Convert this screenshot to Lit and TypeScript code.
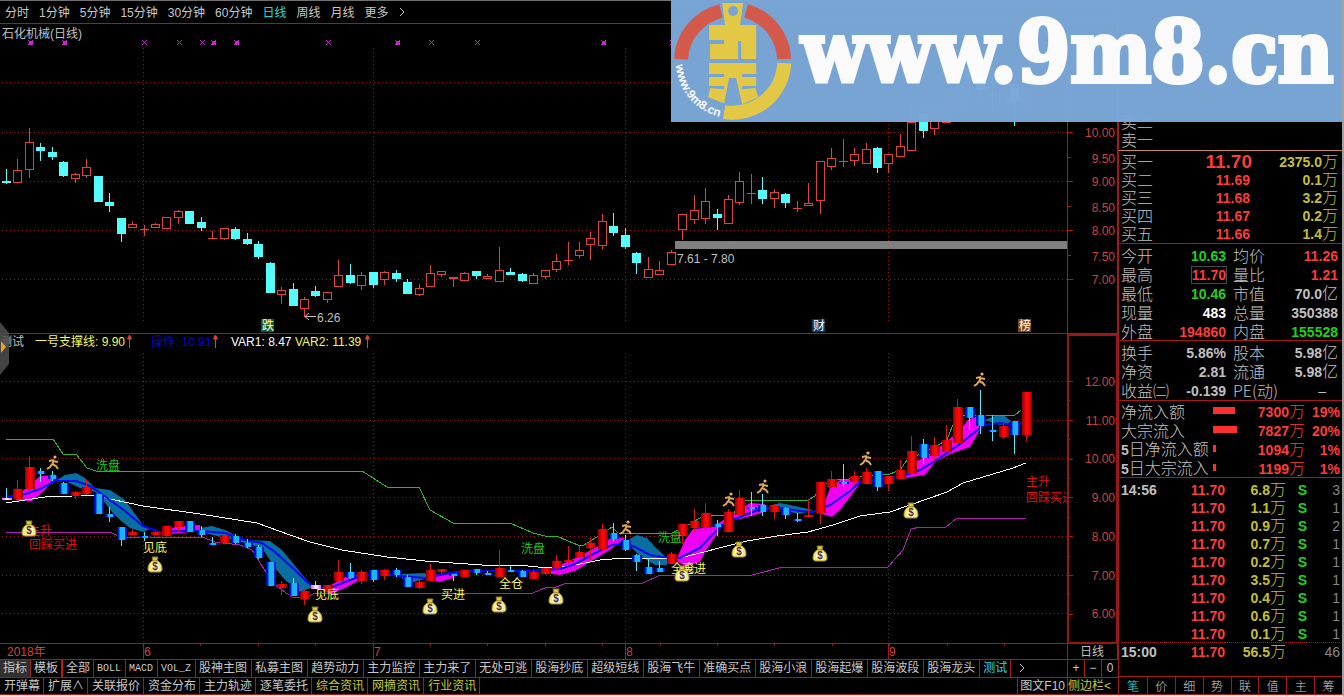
import { LitElement, html, svg, css, nothing } from "lit";
import { customElement, state } from "lit/decorators.js";
import { classMap } from "lit/directives/class-map.js";

type Candle = [kind: "r" | "c", top: number, bottom: number, high: number, low: number];

/* Daily bars, on the vertical scale of the price pane. */
const CANDLES: Candle[] = [
  ["c", 181, 183, 169, 184], ["r", 170, 183, 159, 183], ["r", 142, 170, 128, 178], ["c", 147, 151, 143, 161],
  ["c", 152, 157, 147, 160], ["c", 162, 176, 161, 177], ["r", 174, 179, 173, 183], ["r", 167, 176, 159, 178],
  ["c", 176, 202, 176, 202], ["c", 202, 206, 193, 212], ["c", 218, 234, 218, 242], ["r", 224, 228, 221, 228],
  ["r", 229, 230, 225, 236], ["r", 224, 228, 223, 228], ["r", 217, 229, 217, 229], ["r", 211, 218, 210, 224],
  ["c", 211, 224, 211, 224], ["c", 222, 228, 217, 231], ["r", 238, 239, 231, 239], ["r", 228, 239, 228, 240],
  ["c", 229, 239, 227, 240], ["c", 239, 244, 233, 245], ["c", 244, 257, 241, 259], ["c", 263, 293, 262, 293],
  ["r", 290, 295, 287, 304], ["c", 289, 306, 283, 306], ["r", 299, 309, 297, 317], ["c", 291, 296, 286, 297],
  ["r", 292, 300, 292, 303], ["r", 275, 287, 260, 287], ["c", 275, 283, 264, 284], ["r", 275, 286, 272, 290],
  ["c", 272, 285, 272, 288], ["r", 272, 280, 271, 285], ["c", 273, 279, 270, 282], ["c", 282, 294, 279, 294],
  ["r", 288, 295, 284, 296], ["r", 273, 287, 265, 287], ["r", 271, 275, 271, 277], ["r", 277, 279, 277, 287],
  ["r", 273, 281, 272, 281], ["c", 271, 276, 271, 279], ["r", 276, 279, 274, 279], ["r", 270, 282, 247, 282],
  ["c", 272, 275, 268, 275], ["c", 274, 281, 273, 282], ["r", 275, 284, 273, 284], ["r", 270, 277, 270, 279],
  ["r", 261, 270, 254, 272], ["r", 260, 261, 242, 265], ["r", 250, 256, 242, 258], ["r", 238, 245, 232, 260],
  ["r", 221, 246, 214, 249], ["c", 226, 233, 213, 236], ["c", 235, 247, 228, 249], ["c", 253, 263, 252, 274],
  ["r", 269, 278, 257, 278], ["r", 270, 275, 261, 275], ["r", 252, 265, 250, 265], ["r", 214, 230, 214, 240],
  ["r", 210, 220, 195, 224], ["r", 201, 219, 188, 224], ["c", 214, 218, 209, 230], ["r", 199, 224, 195, 224],
  ["r", 181, 203, 172, 205], ["r", 193, 194, 174, 204], ["c", 190, 199, 177, 204], ["r", 192, 199, 189, 208],
  ["c", 194, 203, 193, 208], ["r", 208, 209, 201, 212], ["r", 203, 206, 183, 206], ["r", 161, 201, 161, 214],
  ["r", 158, 167, 148, 170], ["r", 161, 162, 139, 167], ["r", 154, 161, 148, 166], ["r", 149, 164, 143, 164],
  ["c", 148, 168, 147, 173], ["r", 154, 164, 154, 173], ["r", 146, 157, 134, 157], ["r", 122, 151, 103, 151],
  ["c", 113, 131, 107, 138], ["r", 114, 129, 105, 135], ["r", 108, 123, 89, 123], ["r", 67, 112, 56, 112],
  ["c", 67, 80, 66, 95], ["c", 77, 90, 45, 100], ["c", 95, 96, 77, 110], ["r", 90, 104, 87, 107],
  ["c", 84, 102, 84, 126], ["r", 48, 102, 48, 109],
];

const BLUE_IN_INDICATOR = new Set([12, 18, 39, 42, 56, 57, 65, 69, 73, 86]);
const PALE_IN_INDICATOR = new Set([0, 27]);
const barX = (i: number) => Math.round(6 + i * 11.46);
const toIndicator = (y: number) => Math.round(575.5 + (y - 279.5) * 0.791);

const PRICE_GRID = [82, 132, 181, 230, 279];
const INDICATOR_GRID = [381, 420, 458, 497, 536, 575, 613];
const MONTHS: [number, string][] = [[143, "6"], [373, "7"], [625, "8"], [888, "9"]];
const PRICE_LABELS: [number, string][] = [
  [132, "10.00"], [158, "9.50"], [181, "9.00"], [207, "8.50"], [230, "8.00"], [256, "7.50"], [279, "7.00"],
];
const INDICATOR_LABELS = ["12.00", "11.00", "10.00", "9.00", "8.00", "7.00", "6.00"];
const EVENTS: [number, boolean][] = [
  [30, true], [64, true], [144, false], [179, false], [202, false], [213, true], [236, true],
  [328, false], [397, true], [431, false], [477, false], [603, true], [672, true],
];

const GREEN =
  "6,439 53,439 63,454 76,454 87,468 96,471 362,471 387,487 419,487 430,510 453,523 510,523 533,533 545,536 557,536 568,541 578,545 584,545 592,540 600,535 612,527 618,533 672,533 683,528 700,518 713,515 733,515 740,500 808,500 815,496 822,486 836,479 849,479 862,476 890,474 900,470 907,460 925,452 938,445 947,440 952,427 958,415 1015,415 1021,410";
const WHITE =
  "6,503 45,497 72,496 96,495 110,499 143,506 200,514 257,523 290,535 310,542 342,550 387,557 425,561 453,563 482,565 517,565 538,567 560,567 580,564 600,560 625,558 680,558 700,553 723,547 747,541 777,536 808,532 833,525 860,516 890,512 910,505 947,492 963,483 983,477 1013,468 1026,463";
const PURPLE =
  "6,532 110,532 120,537 202,537 215,542 240,545 252,550 262,566 275,585 292,597 305,598 315,593 533,593 545,588 556,587 567,583 643,583 660,575 752,575 783,567 888,567 903,550 911,529 920,527 946,527 957,518 1026,518";
const BLUE =
  "6,497 25,494 40,489 55,481 76,481 90,486 110,500 125,511 143,526 160,532 180,531 200,531 225,533 245,540 262,543 275,552 295,570 307,582 313,586 330,588 345,582 360,576 380,574 400,576 425,578 450,573 470,571 520,571 545,570 560,569 575,564 595,553 612,545 625,543 635,547 650,555 662,557 680,558 700,548 712,535 725,523 745,515 763,508 780,508 800,511 813,512 830,505 850,491 860,482 875,480 900,477 920,470 935,461 960,444 975,432 985,425 1000,423 1015,425 1026,422";
const RISING = [
  "14,498 30,485 40,476 57,475 45,490 32,501 18,501",
  "165,531 178,526 200,525 200,531 172,534",
  "322,590 345,577 366,573 362,579 345,588 330,594",
  "433,575 460,571 453,578 440,582 425,580",
  "545,569 560,565 580,556 600,545 613,537 625,538 610,550 595,559 575,571 560,575 545,573",
  "677,558 685,540 693,529 712,527 730,516 750,503 765,504 762,513 740,519 724,522 715,537 705,552 700,562 685,566 678,562",
  "822,510 830,488 840,480 855,480 861,482 850,497 840,510 832,517 822,514",
  "905,475 915,462 925,457 945,443 960,430 968,420 977,416 980,430 970,447 950,454 935,462 925,475 905,478",
];
const FALLING = [
  "57,480 65,475 76,473 85,478 95,488 110,490 125,500 143,525 150,529 143,532 130,528 120,520 112,512 103,500 95,492 80,488 65,481",
  "200,528 212,526 225,530 245,540 270,541 282,550 300,572 313,587 300,592 285,580 275,568 262,548 245,543 225,538 205,533",
  "400,574 425,573 428,578 410,583 403,580",
  "628,540 637,535 647,538 655,547 667,558 667,565 655,565 640,556 632,548",
  "768,506 780,503 795,506 813,510 800,514 785,511",
  "985,420 995,416 1005,416 1012,422 1000,425",
];
const BAGS: [number, number][] = [
  [29, 529], [155, 565], [315, 615], [430, 607], [499, 605], [556, 597], [682, 574], [739, 550], [820, 554], [911, 511],
];
const RUNNERS: [number, number][] = [[53, 463], [626, 528], [729, 500], [763, 487], [866, 459], [980, 380]];
const NOTES: [number, number, string, string][] = [
  [96, 470, "green", "洗盘"], [521, 553, "green", "洗盘"], [658, 542, "green", "洗盘"],
  [28, 535, "red", "主升"], [29, 549, "red", "回踩买进"], [1026, 486, "red", "主升"], [1026, 502, "red", "回踩买进"],
  [143, 552, "yellow", "见底"], [315, 599, "yellow", "见底"], [441, 599, "yellow", "买进"],
  [499, 588, "yellow", "全仓"], [671, 573, "yellow", "全仓"], [682, 573, "yellow", "买进"],
];

@customElement("stock-chart")
class StockChart extends LitElement {
  static styles = css`
    :host { display: block; overflow: hidden; }
    svg { display: block; width: 100%; height: auto; }
    text { font: 12px "Liberation Sans", "Noto Sans CJK SC", sans-serif; fill: #c0c0c0; }
    .sharp { shape-rendering: crispEdges; }
    .grid { stroke: #901818; stroke-dasharray: 1 3; }
    .frame { stroke: #a81818; }
    .box { stroke: #9a1616; stroke-width: 2; fill: none; }
    .axis { fill: #d04040; text-anchor: end; }
    .month { fill: #d04040; }
    .up { stroke: #e04040; fill: #000; }
    .down { stroke: #54fcfc; fill: #54fcfc; }
    .line { fill: none; }
    .gap { fill: #808080; }
    .green { fill: #1fc41f; }
    .red { fill: #d81414; }
    .yellow { fill: #f8f850; }
    .blue { fill: #0000e8; }
    .white { fill: #fff; }
    .badge { fill: #fff; }
    .coin { font-size: 10px; font-weight: 700; fill: #503020; text-anchor: middle; }
  `;

  private priceBar([kind, top, bottom, high, low]: Candle, i: number) {
    const x = barX(i);
    const cls = kind === "r" ? "up" : "down";
    const flat = bottom - top < 2;
    return svg`<g class=${cls}>
      ${high < top ? svg`<path d="M${x + 0.5} ${high}V${top}" />` : nothing}
      ${low > bottom ? svg`<path d="M${x + 0.5} ${bottom}V${low}" />` : nothing}
      ${flat
        ? svg`<path d="M${x - 4} ${top + 0.5}h9" />`
        : svg`<rect x=${x - 3.5} y=${top + 0.5} width="8" height=${bottom - top - 1} />`}
    </g>`;
  }

  private indicatorBar([kind, t, b, h, l]: Candle, i: number) {
    const x = barX(i);
    const [top, bottom, high, low] = [t, b, h, l].map(toIndicator);
    const blue = kind === "c" || BLUE_IN_INDICATOR.has(i);
    const height = Math.max(bottom - top, 2);
    const fill = PALE_IN_INDICATOR.has(i) ? "url(#pale)" : blue ? "url(#cool)" : "url(#warm)";
    return svg`<path d="M${x + 0.5} ${high}V${low}" stroke=${blue ? "#54e8fc" : "#e01010"} />
      <rect x=${x - 4} y=${top} width="10" height=${height} fill=${fill} />`;
  }

  private arrow(x: number) {
    return svg`<path d="M${x} 348V336M${x - 2} 339l2 -4l2 4z" stroke="#e04040" fill="#e04040" />`;
  }

  private badge(x: number, color: string, label: string) {
    return svg`<rect x=${x - 7} y="319" width="13" height="13" fill=${color} />
      <text class="badge" x=${x - 6} y="330">${label}</text>`;
  }

  private bag([x, y]: [number, number]) {
    return svg`<g transform="translate(${x} ${y})">
      <path d="M-3 -8L3 -8L2 -4L-2 -4Z" fill="#d8c850" stroke="#8c7c20" />
      <path d="M-3 -4H3C6 -2 7 1 7 4C7 6 6 7 4 7H-4C-6 7 -7 6 -7 4C-7 1 -6 -2 -3 -4Z" fill="#f4e878" stroke="#a89830" />
      <circle cx="0" cy="2" r="4" fill="#fffbe8" />
      <text class="coin" x="0" y="5">$</text>
    </g>`;
  }

  private runner([x, y]: [number, number]) {
    return svg`<g transform="translate(${x} ${y})" stroke="#e0a850" fill="none" stroke-width="2">
      <circle cx="2" cy="-6" r="1.6" fill="#e8b468" stroke="none" />
      <path d="M1 -3L-1 2M1 -3L-4 -2M0 -2L5 -1M-1 1L-3 4L-6 6M-1 1L3 3L5 6" />
    </g>`;
  }

  render() {
    return html`<svg viewBox="0 24 1118 635" role="img" aria-label="石化机械 日线">
      <defs>
        <linearGradient id="warm"><stop offset="0" stop-color="#900000" /><stop offset=".4" stop-color="#f80808" /><stop offset=".65" stop-color="#f80808" /><stop offset="1" stop-color="#900000" /></linearGradient>
        <linearGradient id="cool"><stop offset="0" stop-color="#0000b0" /><stop offset=".2" stop-color="#0020e0" /><stop offset=".3" stop-color="#18b4fc" /><stop offset=".75" stop-color="#18b4fc" /><stop offset=".85" stop-color="#0020e0" /><stop offset="1" stop-color="#0000b0" /></linearGradient>
        <linearGradient id="pale"><stop offset="0" stop-color="#e060e0" /><stop offset=".5" stop-color="#fff" /><stop offset="1" stop-color="#e060e0" /></linearGradient>
        <clipPath id="plot"><rect x="0" y="24" width="1068" height="619" /></clipPath>
      </defs>
      <g class="sharp grid">
        ${[...PRICE_GRID, ...INDICATOR_GRID].map((y) => svg`<path d="M2 ${y + 0.5}H1067" />`)}
        ${MONTHS.map(([x]) => svg`<path d="M${x + 0.5} 48V321M${x + 0.5} 353V642" />`)}
      </g>
      <g class="sharp frame">
        <path d="M0 333.5H1118M0 643.5H1118M1067.5 24V659M1117.5 24V659" />
        ${PRICE_LABELS.map((_, i) => svg`<path d="M1067 ${132.5 + Math.round(i * 24.5)}h${i % 2 ? 4 : 6}" />`)}
        ${Array.from({ length: 13 }, (_, i) => svg`<path d="M1067 ${381.5 + Math.round(i * 19.4)}h${i % 2 ? 3 : 6}" />`)}
        ${Array.from({ length: 16 }, (_, i) => svg`<path d="M${Math.round(143 + i * 57.4) + 0.5} 643v3" />`)}
        ${MONTHS.map(([x]) => svg`<path d="M${x + 0.5} 643V659" />`)}
      </g>
      <rect class="sharp box" x="1068" y="335" width="49" height="308" />
      ${PRICE_LABELS.map(([y, t]) => svg`<text class="axis" x="1115" y=${y + 5}>${t}</text>`)}
      ${INDICATOR_LABELS.map((t, i) => svg`<text class="axis" x="1115" y=${INDICATOR_GRID[i] + 5}>${t}</text>`)}
      <text x="2" y="38">石化机械(日线)</text>
      ${EVENTS.map(([x, solid]) => svg`<g class="sharp" stroke="#c828c8">
        <path d="M${x - 2} 40l5 5M${x + 3} 40l-5 5" />${solid ? svg`<rect x=${x - 1.5} y="40.5" width="4" height="4" fill="#c828c8" stroke="none" />` : nothing}</g>`)}
      <g class="sharp">${CANDLES.map((c, i) => this.priceBar(c, i))}</g>
      <rect class="gap" x="675" y="241" width="392" height="8" />
      <text x="677" y="263">7.61 - 7.80</text>
      <path class="line" d="M316 316.5H305M309 313l-4 3.500l4 3.500" stroke="#c0c0c0" />
      <text x="317" y="322">6.26</text>
      ${this.badge(268, "#186018", "跌")}${this.badge(819, "#103868", "财")}${this.badge(1025, "#804810", "榜")}
      <text x="0" y="346">测试</text>
      <text class="yellow" x="35" y="346">一号支撑线: 9.90</text>
      <text class="blue" x="151" y="346">操作: 10.91</text>
      <text class="white" x="231" y="346">VAR1: 8.47</text>
      <text class="yellow" x="295" y="346">VAR2: 11.39</text>
      ${this.arrow(129.5)}${this.arrow(215.5)}${this.arrow(367.5)}
      <g clip-path="url(#plot)">
        <g class="line sharp">
          <polyline points=${GREEN} stroke="#28b828" />
          <polyline points=${PURPLE} stroke="#b020b0" />
        </g>
        ${RISING.map((p) => svg`<polygon points=${p} fill="#f000f0" />`)}
        ${FALLING.map((p) => svg`<polygon points=${p} fill="#0a6ea0" />`)}
        <g class="line">
          <polyline class="sharp" points=${WHITE} stroke="#fff" />
          <polyline points=${BLUE} stroke="#0808f0" stroke-width="2" />
        </g>
        <g class="sharp">${CANDLES.map((c, i) => this.indicatorBar(c, i))}</g>
        ${RUNNERS.map((p) => this.runner(p))}
        ${NOTES.map(([x, y, cls, t]) => svg`<text class=${cls} x=${x} y=${y}>${t}</text>`)}
        ${BAGS.map((p) => this.bag(p))}
      </g>
      <text class="month" x="7" y="656">2018年</text>
      ${MONTHS.map(([x, t]) => svg`<text class="month" x=${x + 1} y="656">${t}</text>`)}
      <text x="1080" y="656">日线</text>
      <path d="M0 322L9 333V364L0 375Z" fill="#505050" fill-opacity=".85" />
      <path d="M1 341L6 347L1 353Z" fill="#f0a020" />
    </svg>`;
  }
}

/* A figure followed by an optional Chinese unit. */
const figure = (text: string, cls = "") => {
  const unit = /[万亿]$/.test(text) ? text.slice(-1) : "";
  return html`<span class="num ${cls}">${unit ? text.slice(0, -1) : text}</span>${unit
    ? html`<span class="${cls}">${unit}</span>`
    : nothing}`;
};

/* A label whose leading day count is set like a figure. */
const label = (text: string) => (text.startsWith("5") ? html`<span class="num">5</span>${text.slice(1)}` : text);

type Stat = [string, string, string, string, string, string];
const BIDS = [["买一", "11.70", "2375.0万"], ["买二", "11.69", "0.1万"], ["买三", "11.68", "3.2万"], ["买四", "11.67", "0.2万"], ["买五", "11.66", "1.4万"]];
const QUOTE: Stat[] = [
  ["今开", "10.63", "green", "均价", "11.26", "red"],
  ["最高", "11.70", "red framed", "量比", "1.21", "red"],
  ["最低", "10.46", "green", "市值", "70.0亿", ""],
  ["现量", "483", "white", "总量", "350388", ""],
  ["外盘", "194860", "red", "内盘", "155528", "green"],
];
const BASICS: Stat[] = [
  ["换手", "5.86%", "", "股本", "5.98亿", ""],
  ["净资", "2.81", "", "流通", "5.98亿", ""],
  ["收益㈡", "-0.139", "", "PE(动)", "–", "blank"],
];
const FLOWS: [string, number, string, string][] = [
  ["净流入额", 22, "7300万", "19%"], ["大宗流入", 24, "7827万", "20%"],
  ["5日净流入额", 3, "1094万", "1%"], ["5日大宗流入", 3, "1199万", "1%"],
];
const TICKS: [string, string, string, string][] = [
  ["14:56", "6.8万", "S", "3"], ["", "1.1万", "S", "1"], ["", "0.9万", "S", "2"], ["", "0.7万", "S", "1"], ["", "0.2万", "S", "1"],
  ["", "3.5万", "S", "1"], ["", "0.4万", "S", "1"], ["", "0.6万", "S", "1"], ["", "0.1万", "S", "1"], ["15:00", "56.5万", "", "46"],
];

@customElement("quote-panel")
class QuotePanel extends LitElement {
  static properties = { tab: { state: true } };
  declare tab: string;
  constructor() {
    super();
    this.tab = "笔";
  }

  static styles = css`
    :host { display: flex; flex-direction: column; border-left: 1px solid #a81818; color: #c0c0c0; font: 300 16px/14px "Noto Sans CJK SC", sans-serif; }
    table { width: 100%; border-collapse: collapse; table-layout: fixed; }
    th, td { padding: 0; font-weight: 300; text-align: left; white-space: nowrap; }
    td { text-align: right; }
    section { border-bottom: 1px solid #a81818; padding: 0 4px 0 2px; }
    .asks { height: 148px; display: flex; flex-direction: column; justify-content: flex-end; border-bottom-color: #c89030; padding-bottom: 2px; line-height: 18px; }
    .bids, .basics { padding-top: 1px; padding-bottom: 1px; }
    .quote { padding-top: 1px; }
    .flows { padding-right: 2px; }
    .bids tr, .ticks tr { height: 18px; }
    .quote tr, .flows tr, .basics tr { height: 19px; }
    .ticks { flex: 1; padding: 2px 2px 0 2px; border-bottom: 1px solid #a81818; }
    .ticks tr:last-child td, .ticks tr:last-child th { border-top: 1px dotted #a81818; }
    .num { font: 700 14px/14px "Liberation Sans", sans-serif; }
    .big { font-size: 19px; }
    .red { color: #fc3c3c; }
    .green { color: #20d020; }
    .white { color: #fff; }
    .yellow { color: #c0c030; }
    .dim { color: #888; font-weight: 400; }
    .blank { padding-right: 12px; font-weight: 400; }
    .framed { outline: 1px solid #484848; }
    .second { padding-left: 7px; }
    .price { padding-right: 2px; }
    .bar { display: block; height: 7px; background: #fc3030; }
    .c-label { width: 44px; } .c-price { width: 87px; }
    .c-a { width: 52px; } .c-b { width: 53px; } .c-c { width: 54px; }
    .c-flow { width: 92px; } .c-bar { width: 26px; } .c-amount { width: 66px; }
    .c-time { width: 44px; } .c-deal { width: 60px; } .c-vol { width: 61px; } .c-side { width: 21px; }
    .tabs { display: grid; grid-template-columns: repeat(8, 1fr); height: 18px; box-sizing: border-box; border-bottom: 1px solid #a81818; }
    button { all: unset; text-align: center; font-size: 12px; line-height: 17px; color: #d0d0d0; border-left: 1px solid #a81818; cursor: pointer; }
    button:first-child { border-left: 0; }
    .on { color: #30e0e0; }
  `;

  private stats(rows: Stat[]) {
    return html`<table>
      <colgroup><col class="c-a" /><col class="c-b" /><col class="c-c" /><col /></colgroup>
      ${rows.map(([l1, v1, c1, l2, v2, c2]) => html`<tr>
        <th scope="row">${l1}</th><td>${figure(v1, c1)}</td>
        <th scope="row" class="second">${l2}</th><td>${figure(v2, c2)}</td>
      </tr>`)}
    </table>`;
  }

  render() {
    return html`
      <section class="asks"><span>卖二</span><span>卖一</span></section>
      <section class="bids"><table>
        <colgroup><col class="c-label" /><col class="c-price" /><col /></colgroup>
        ${BIDS.map(([l, p, v], i) => html`<tr><th scope="row">${l}</th><td class=${i ? "price" : ""}>${figure(p, i ? "red" : "red big")}</td><td>${figure(v, "yellow")}</td></tr>`)}
      </table></section>
      <section class="quote">${this.stats(QUOTE)}</section>
      <section class="basics">${this.stats(BASICS)}</section>
      <section class="flows"><table>
        <colgroup><col class="c-flow" /><col class="c-bar" /><col class="c-amount" /><col /></colgroup>
        ${FLOWS.map(([l, w, v, p]) => html`<tr>
          <th scope="row">${label(l)}</th><td><span class="bar" style="width:${w}px"></span></td>
          <td>${figure(v, "red")}</td><td>${figure(p, "red")}</td></tr>`)}
      </table></section>
      <section class="ticks"><table>
        <colgroup><col class="c-time" /><col class="c-deal" /><col class="c-vol" /><col class="c-side" /><col /></colgroup>
        ${TICKS.map(([t, v, s, n]) => html`<tr>
          <th scope="row">${figure(t)}</th><td>${figure("11.70", "red")}</td><td>${figure(v, "yellow")}</td>
          <td>${figure(s, "green")}</td><td>${figure(n, "dim")}</td></tr>`)}
      </table></section>
      <nav class="tabs">${["笔", "价", "细", "势", "联", "值", "主", "筹"].map((t) => html`
        <button class=${classMap({ on: t === this.tab })} @click=${() => (this.tab = t)}>${t}</button>`)}</nav>`;
  }
}

@customElement("site-banner")
class SiteBanner extends LitElement {
  static styles = css`
    :host { display: block; background: #7ba8d8; opacity: 0.98; }
    svg { display: block; width: 100%; height: auto; }
    .name { font: 700 85px "DejaVu Serif Condensed", "DejaVu Serif", serif; fill: #fff; stroke: #fff; stroke-width: 4; }
    .ring { font: 700 12px "Liberation Sans", sans-serif; fill: #fff; }
  `;
  render() {
    return html`<svg viewBox="0 0 670 122" role="img" aria-label="www.9m8.cn">
      <defs><path id="arc" d="M5 65A57 57 0 0 0 56 118" /></defs>
      <g fill="none" stroke-width="14">
        <path d="M10 59A52 52 0 0 1 50 11" stroke="#d85c4c" />
        <path d="M75 11A52 52 0 0 1 113 59" stroke="#d85c4c" />
        <path d="M113 63A52 52 0 0 1 53 112" stroke="#e8cc48" />
      </g>
      <path fill="#e8cc48" fill-rule="evenodd" d="M51 3H72L69 25H85V59H70V41H67V59H39V44H53V40H38V25H54ZM62 6A5 5 0 1 0 62 16A5 5 0 1 0 62 6ZM38 63H85V74H71V77H85V86H71V89L84 88L87 97L71 104L65 78H58L53 103L37 97L39 88L53 89V86H38V77H53V74H38Z" />
      <text class="ring"><textPath href="#arc">www.9m8.cn</textPath></text>
      <text class="name" x="130" y="82">www.9m8.cn</text>
    </svg>`;
  }
}

const PERIODS = ["分时", "1分钟", "5分钟", "15分钟", "30分钟", "60分钟", "日线", "周线", "月线", "更多"];
const INDICATORS = [
  "指标", "模板", "全部", "BOLL", "MACD", "VOL_Z", "股神主图", "私募主图", "趋势动力", "主力监控", "主力来了", "无处可逃",
  "股海抄底", "超级短线", "股海飞牛", "准确买点", "股海小浪", "股海起爆", "股海波段", "股海龙头", "测试",
];
const TOOLS = ["开弹幕", "扩展∧", "关联报价", "资金分布", "主力轨迹", "逐笔委托", "综合资讯", "网摘资讯", "行业资讯"];

@customElement("app-root")
class AppRoot extends LitElement {
  @state() private period = "日线";
  @state() private indicator = "测试";

  static styles = css`
    :host {
      display: grid; grid-template-columns: minmax(0, 1fr) 224px; position: relative; background: #000; color: #c8c8c8;
      border-right: 2px solid #a0a0a0; border-bottom: 2px solid #e8e8e8;
      font: 12px/17px "Liberation Sans", "Noto Sans CJK SC", sans-serif;
    }
    .main { display: flex; flex-direction: column; min-width: 0; }
    button { all: unset; cursor: pointer; white-space: nowrap; }
    .periods { display: flex; align-items: center; gap: 10px; height: 24px; box-sizing: border-box; padding: 2px 5px 0; border-top: 1px solid #707070; border-bottom: 1px solid #a81818; }
    .row { display: flex; height: 18px; box-sizing: border-box; border-top: 1px solid #a81818; }
    .last { border-bottom: 1px solid #a81818; line-height: 16px; }
    .row button { padding: 0 4px 0 3px; border-right: 1px solid #a81818; }
    .last button { padding: 0 3px 0 4px; }
    .row .two { padding: 0 3px; }
    .row .code { font: 10px/17px "Liberation Mono", monospace; }
    .row .mark { border-right: 2px solid #d01010; }
    .row .pressed { background: #303030; }
    .row .more { border-right: 0; padding: 0 8px; }
    .push { margin-left: auto; display: flex; }
    .row .push button { border-left: 1px solid #a81818; border-right: 0; }
    .row .zoom { width: 16px; padding: 0; text-align: center; }
    .row .side { padding: 0 2px; }
    .row .fold { padding: 0; width: 50px; }
    .on { color: #30d8d8; }
    .gold { color: #c8c830; }
    site-banner { position: absolute; top: 0; right: 0; width: 50%; }
  `;

  render() {
    return html`
      <main class="main">
        <nav class="periods">
          ${PERIODS.map((p) => html`<button class=${classMap({ on: p === this.period })} @click=${() => (this.period = p)}>${p}</button>`)}
          <button aria-label="展开"><svg width="7" height="10" viewBox="0 0 7 10" fill="none" stroke="#c8c8c8"><path d="M1 1l4 4l-4 4" /></svg></button>
        </nav>
        <stock-chart></stock-chart>
        <div class="row">
          ${INDICATORS.map((t, i) => html`<button
            class=${classMap({ on: t === this.indicator, two: t.length === 2, code: /^[A-Z]/.test(t), mark: i === 1, pressed: i === 0 })}
            @click=${() => (this.indicator = t)}>${t}</button>`)}
          <button class="more" aria-label="更多指标"><svg width="6" height="8" viewBox="0 0 6 8" fill="none" stroke="#c8c8c8"><path d="M1 0l4 4l-4 4" /></svg></button>
          <div class="push"><button class="zoom">+</button><button class="zoom">−</button><button class="zoom">0</button></div>
        </div>
        <div class="row last">
          ${TOOLS.map((t, i) => html`<button class=${classMap({ gold: i > 5 })}>${t}</button>`)}
          <div class="push"><button class="side">图文F10</button><button class="fold gold">侧边栏&lt;</button></div>
        </div>
      </main>
      <quote-panel></quote-panel>
      <site-banner></site-banner>`;
  }
}
